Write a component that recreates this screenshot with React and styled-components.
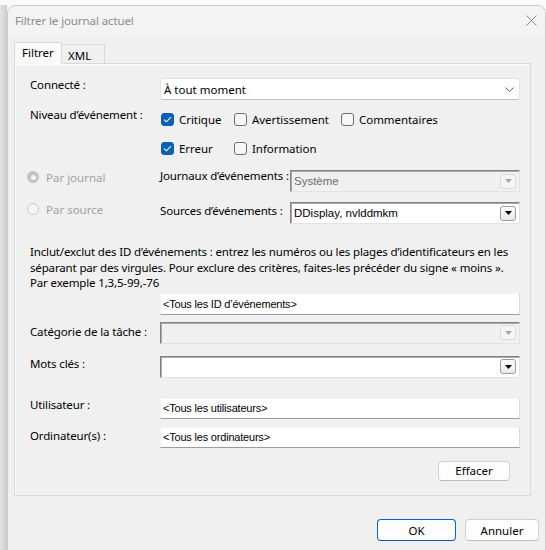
import React from 'react';
import styled, { createGlobalStyle } from 'styled-components';

const Global = createGlobalStyle`
  html, body { margin: 0; padding: 0; }
  body {
    width: 546px; height: 550px; overflow: hidden;
    font-family: "Noto Sans", "Open Sans", sans-serif;
    font-size: 12px; color: #000;
  }
`;

const UI = `"Noto Sans", "Open Sans", sans-serif`;
const CLASSIC = `"Liberation Sans", "DejaVu Sans", sans-serif`;

const Desktop = styled.div`
  width: 546px; height: 550px; box-sizing: border-box;
  padding: 5px 0 0 7px; overflow: hidden;
  background:
    linear-gradient(#fafafa, #fafafa) top left / 100% 5px no-repeat,
    linear-gradient(to right, #e2e2e2, #cdcdcd) left top / 7px 100% no-repeat,
    #fafafa;
`;

const Window = styled.div`
  width: 539px; height: 560px; box-sizing: border-box;
  background: #f0f0f0;
  border: 1px solid #cbcbcb;
  border-radius: 8px 8px 0 0;
  display: flex; flex-direction: column; overflow: hidden;
`;

const TitleBar = styled.div`
  height: 29px; flex: none;
  display: flex; align-items: center; justify-content: space-between;
  padding: 0 8px 0 7px;
  background: #f3f3f3;
`;

const Title = styled.span`
  font-family: ${UI}; font-size: 11.5px; color: #8c8c8c; letter-spacing: -0.1px;
`;

const Body = styled.div`
  padding: 8px 6px 0 6px;
  display: flex; flex-direction: column;
`;

const Tabs = styled.div`
  display: flex; align-items: flex-end; height: 21px;
  position: relative; z-index: 1; margin-bottom: -1px;
`;

const Tab = styled.div`
  box-sizing: border-box;
  height: ${p => (p.$active ? '22px' : '20px')};
  width: ${p => p.$w}px;
  padding: ${p => (p.$active ? '2px 0 0 7px' : '3px 0 0 6px')};
  background: ${p => (p.$active ? '#f9f9f9' : '#f0f0f0')};
  border: 1px solid #d9d9d9;
  border-bottom: ${p => (p.$active ? '1px solid #f9f9f9' : '1px solid #d9d9d9')};
  border-left: ${p => (p.$active ? '1px solid #d9d9d9' : 'none')};
  font-family: ${UI}; font-size: 11.5px; line-height: 16px;
`;

const Panel = styled.div`
  width: 517px; height: 433px; box-sizing: border-box;
  border: 1px solid #d9d9d9;
  box-shadow: inset 1px 1px 0 #fbfbfb;
  background: #f0f0f0;
  padding: 14px 10px 0 15px;
  display: flex; flex-direction: column;
`;

const FieldRow = styled.div`
  display: grid; grid-template-columns: 130px 1fr;
  margin-top: ${p => p.$mt || 0}px;
`;

const RadioRow = styled.div`
  display: grid; grid-template-columns: 133px 130px 1fr;
  margin-left: -3px;
  margin-top: ${p => p.$mt || 0}px;
`;

const Label = styled.div`
  font-family: ${UI}; font-size: 11.5px; line-height: 16px;
  align-self: start; white-space: nowrap;
  margin-top: ${p => p.$dy || 0}px;
  color: ${p => (p.$disabled ? '#a2a2a2' : '#000')};
  letter-spacing: -0.15px;
`;

const Win11Combo = styled.div`
  height: 22px; box-sizing: border-box;
  background: #fff;
  border: 1px solid #e3e3e3; border-bottom-color: #c4c4c4;
  border-radius: 3px;
  display: flex; align-items: center; justify-content: space-between;
  padding: 0 5px 0 3px;
  font-family: ${UI}; font-size: 11.5px;
`;

const TextBox = styled.div`
  height: ${p => p.$h || 22}px; box-sizing: border-box;
  background: #fff;
  border: 1px solid #f2f2f2; border-right-color: #dadada; border-bottom-color: #9c9c9c;
  display: flex; align-items: center; padding-left: 2px;
  font-family: ${CLASSIC}; font-size: 11px; letter-spacing: -0.2px;
`;

const ClassicCombo = styled.div`
  height: 22px; box-sizing: border-box;
  background: ${p => (p.$disabled ? '#f0f0f0' : '#fff')};
  border: 1px solid; border-color: #828282 #e3e3e3 #e3e3e3 #828282;
  box-shadow: inset 1px 1px 0 #a9a9a9;
  display: flex; align-items: center; justify-content: space-between;
  padding: 0 3px 0 3px;
  font-family: ${CLASSIC}; font-size: 11.5px; letter-spacing: 0;
  color: ${p => (p.$disabled ? '#6d6d6d' : '#000')};
`;

const DropButton = styled.div`
  width: 16px; height: 15px; box-sizing: border-box;
  border: 1px solid ${p => (p.$disabled ? '#dadada' : '#9a9a9a')};
  border-radius: 3px;
  background: ${p => (p.$disabled ? '#f4f4f4' : 'linear-gradient(#fdfdfd, #e9e9e9)')};
  display: flex; align-items: center; justify-content: center;
`;

const CheckGrid = styled.div`
  display: grid; grid-template-columns: 73px 107px auto;
  row-gap: 9px; padding-left: 1px;
`;

const CheckItem = styled.label`
  display: flex; align-items: center; gap: 5px; height: 20px;
  font-family: ${UI}; font-size: 11.5px; letter-spacing: -0.05px;
`;

const Box = styled.span`
  width: 13px; height: 13px; box-sizing: border-box; flex: none;
  border-radius: 3px;
  background: ${p => (p.$checked ? '#0b5fb8' : '#f7f7f7')};
  border: 1px solid ${p => (p.$checked ? '#0b5fb8' : '#6e6e6e')};
  display: flex; align-items: center; justify-content: center;
`;

const RadioItem = styled.div`
  display: flex; align-items: center; gap: 7px; height: 14px;
  font-family: ${UI}; font-size: 11.5px; color: #a2a2a2;
`;

const RadioDot = styled.span`
  width: 12px; height: 12px; box-sizing: border-box; border-radius: 50%; flex: none;
  background: ${p => (p.$on ? '#c2c2c2' : '#f5f5f5')};
  border: 1px solid ${p => (p.$on ? '#c2c2c2' : '#c9c9c9')};
  display: flex; align-items: center; justify-content: center;
  &::after {
    content: ''; display: ${p => (p.$on ? 'block' : 'none')};
    width: 5px; height: 5px; border-radius: 50%; background: #f4f4f4;
  }
`;

const Paragraph = styled.p`
  margin: 20px 0 0 0; white-space: nowrap;
  font-family: ${UI}; font-size: 11.5px; line-height: 15.5px; letter-spacing: -0.15px;
`;

const ButtonRow = styled.div`
  display: flex; justify-content: flex-end; gap: ${p => p.$gap || 0}px;
  margin-top: ${p => p.$mt || 0}px;
  padding-right: ${p => p.$pr || 0}px;
`;

const Button = styled.button`
  width: ${p => p.$w}px; height: ${p => p.$h || 22}px; box-sizing: border-box;
  border-radius: 4px;
  border: 1px solid ${p => (p.$primary ? '#0a64c0' : '#d0d0d0')};
  border-bottom-color: ${p => (p.$primary ? '#0a55a8' : '#bcbcbc')};
  background: #fdfdfd;
  font-family: ${UI}; font-size: 11.5px; color: #000; padding: 0;
`;

const Chevron = () => (
  <svg width="9" height="5" viewBox="0 0 9 5">
    <path d="M0.5 0.5 L4.5 4.5 L8.5 0.5" fill="none" stroke="#606060" strokeWidth="1" />
  </svg>
);

const Triangle = ({ color }) => (
  <svg width="7" height="4" viewBox="0 0 7 4">
    <path d="M0 0 H7 L3.5 4 Z" fill={color} />
  </svg>
);

const Check = () => (
  <svg width="9" height="7" viewBox="0 0 9 7">
    <path d="M1 3.6 L3.4 5.8 L8 1.2" fill="none" stroke="#fff" strokeWidth="1.1" />
  </svg>
);

const CloseIcon = () => (
  <svg width="11" height="11" viewBox="0 0 11 11">
    <path d="M0.5 0.5 L10.5 10.5 M10.5 0.5 L0.5 10.5" stroke="#8a8a8a" strokeWidth="1" />
  </svg>
);

const CB = ({ checked, children }) => (
  <CheckItem>
    <Box $checked={checked}>{checked && <Check />}</Box>
    {children}
  </CheckItem>
);

export default function App() {
  return (
    <Desktop>
      <Global />
      <Window>
        <TitleBar>
          <Title>Filtrer le journal actuel</Title>
          <CloseIcon />
        </TitleBar>
        <Body>
          <Tabs>
            <Tab $active $w={48}>Filtrer</Tab>
            <Tab $w={43}>XML</Tab>
          </Tabs>
          <Panel>
            <FieldRow>
              <Label $dy={-1}>Connecté :</Label>
              <Win11Combo>
                <span>À tout moment</span>
                <Chevron />
              </Win11Combo>
            </FieldRow>

            <FieldRow $mt={9}>
              <Label $dy={-2}>Niveau d’événement :</Label>
              <CheckGrid>
                <CB checked>Critique</CB>
                <CB>Avertissement</CB>
                <CB>Commentaires</CB>
                <CB checked>Erreur</CB>
                <CB>Information</CB>
              </CheckGrid>
            </FieldRow>

            <RadioRow $mt={12}>
              <RadioItem>
                <RadioDot $on />
                <span>Par journal</span>
              </RadioItem>
              <Label $dy={-2}>Journaux d’événements :</Label>
              <ClassicCombo $disabled>
                <span>Système</span>
                <DropButton $disabled><Triangle color="#a6a6a6" /></DropButton>
              </ClassicCombo>
            </RadioRow>

            <RadioRow $mt={10}>
              <RadioItem>
                <RadioDot />
                <span>Par source</span>
              </RadioItem>
              <Label $dy={1}>Sources d’événements :</Label>
              <ClassicCombo>
                <span>DDisplay, nvlddmkm</span>
                <DropButton><Triangle color="#000" /></DropButton>
              </ClassicCombo>
            </RadioRow>

            <Paragraph>
              Inclut/exclut des ID d’événements : entrez les numéros ou les plages d’identificateurs en les<br />
              séparant par des virgules. Pour exclure des critères, faites-les précéder du signe « moins ».<br />
              Par exemple 1,3,5-99,-76
            </Paragraph>

            <FieldRow $mt={2}>
              <span />
              <TextBox>&lt;Tous les ID d’événements&gt;</TextBox>
            </FieldRow>

            <FieldRow $mt={7}>
              <Label $dy={2}>Catégorie de la tâche :</Label>
              <ClassicCombo $disabled>
                <span />
                <DropButton $disabled><Triangle color="#a6a6a6" /></DropButton>
              </ClassicCombo>
            </FieldRow>

            <FieldRow $mt={12}>
              <Label>Mots clés :</Label>
              <ClassicCombo>
                <span />
                <DropButton><Triangle color="#000" /></DropButton>
              </ClassicCombo>
            </FieldRow>

            <FieldRow $mt={20}>
              <Label $dy={-1}>Utilisateur :</Label>
              <TextBox $h={21}>&lt;Tous les utilisateurs&gt;</TextBox>
            </FieldRow>

            <FieldRow $mt={8}>
              <Label $dy={1}>Ordinateur(s) :</Label>
              <TextBox $h={21}>&lt;Tous les ordinateurs&gt;</TextBox>
            </FieldRow>

            <ButtonRow $mt={13} $pr={10}>
              <Button $w={72} $h={20}>Effacer</Button>
            </ButtonRow>
          </Panel>

          <ButtonRow $mt={23} $gap={9}>
            <Button $primary $w={79}>OK</Button>
            <Button $w={74}>Annuler</Button>
          </ButtonRow>
        </Body>
      </Window>
    </Desktop>
  );
}
